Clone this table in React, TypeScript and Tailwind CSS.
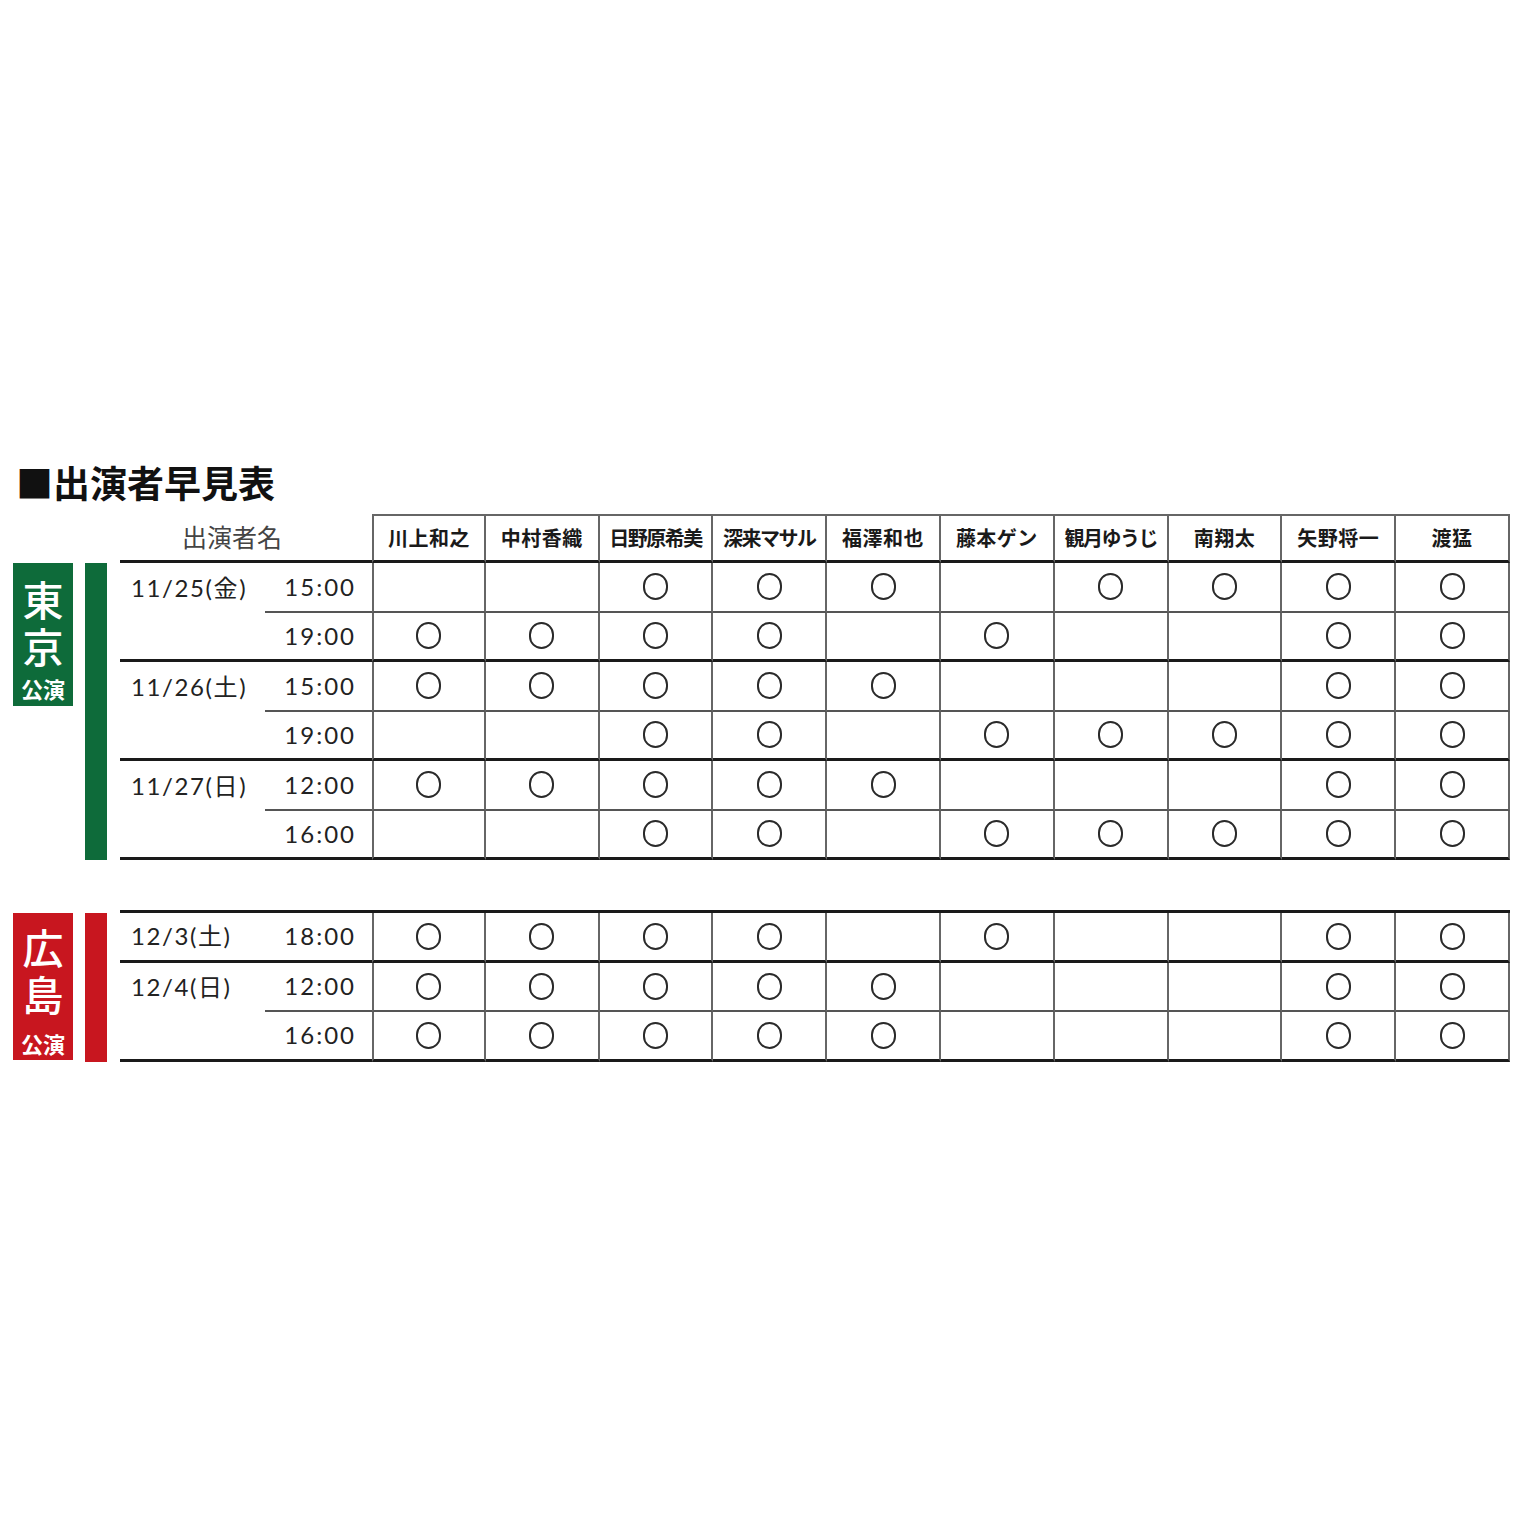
const names = [
  "川上和之",
  "中村香織",
  "日野原希美",
  "深来マサル",
  "福澤和也",
  "藤本ゲン",
  "観月ゆうじ",
  "南翔太",
  "矢野将一",
  "渡猛",
];

type Row = { date?: string; time: string; cast: string; thick: boolean };

const tokyo: Row[] = [
  { date: "11/25(金)", time: "15:00", cast: "0011101111", thick: false },
  { time: "19:00", cast: "1111010011", thick: true },
  { date: "11/26(土)", time: "15:00", cast: "1111100011", thick: false },
  { time: "19:00", cast: "0011011111", thick: true },
  { date: "11/27(日)", time: "12:00", cast: "1111100011", thick: false },
  { time: "16:00", cast: "0011011111", thick: true },
];

const hiroshima: Row[] = [
  { date: "12/3(土)", time: "18:00", cast: "1111010011", thick: true },
  { date: "12/4(日)", time: "12:00", cast: "1111100011", thick: false },
  { time: "16:00", cast: "1111100011", thick: true },
];

const font = { fontFamily: 'Lato, "Noto Sans CJK JP", sans-serif' };
const jp = { fontFamily: '"Noto Sans CJK JP", sans-serif' };

function TableRow({ row }: { row: Row }) {
  const line = row.thick ? "border-b-[3px] border-[#1a1a1a]" : "border-b-2 border-[#555]";
  return (
    <div className="flex h-[49.5px]">
      <div
        className={`w-[145px] flex items-center pl-[11px] text-[24px] tracking-[1.6px] text-[#222] ${
          row.thick ? "border-b-[3px] border-[#1a1a1a]" : ""
        }`}
        style={font}
      >
        {row.date}
      </div>
      <div
        className={`w-[107px] flex items-center justify-end pr-[16px] text-[24px] tracking-[2px] text-[#222] ${line}`}
        style={font}
      >
        {row.time}
      </div>
      {row.cast.split("").map((c, i) => (
        <div
          key={i}
          className={`w-[113.8px] flex items-center justify-center border-r-2 border-r-[#666] ${
            i === 0 ? "border-l-2 border-l-[#666]" : ""
          } ${line}`}
        >
          {c === "1" && <div className="w-[25px] h-[27px] rounded-full border-2 border-[#2a2a2a]" />}
        </div>
      ))}
    </div>
  );
}

function Section({
  rows,
  color,
  place,
  boxHeight,
  padTop,
  gapLast,
}: {
  rows: Row[];
  color: string;
  place: [string, string];
  boxHeight: string;
  padTop: string;
  gapLast: string;
}) {
  return (
    <div className="flex">
      <div className="flex pl-[13px]">
        <div className={`w-[60px] ${boxHeight} ${color} flex flex-col items-center ${padTop} text-white`} style={jp}>
          <span className="text-[41px] leading-[42px] font-medium">{place[0]}</span>
          <span className="mt-[5px] text-[41px] leading-[42px] font-medium">{place[1]}</span>
          <span className={`${gapLast} text-[22px] leading-[22px] font-bold`}>公演</span>
        </div>
        <div className={`ml-[12px] w-[22px] ${color}`} />
      </div>
      <div className="ml-[13px] flex flex-col">
        {rows.map((r, i) => (
          <TableRow key={i} row={r} />
        ))}
      </div>
    </div>
  );
}

export default function App() {
  return (
    <div className="w-[1536px] h-[1536px] bg-white pt-[456px]" style={font}>
      <h1 className="pl-[16px] text-[37px] leading-[52px] font-bold text-[#111] h-[58px]" style={jp}>
        ■出演者早見表
      </h1>
      <div className="flex pl-[120px] h-[49px]">
        <div
          className="w-[252px] flex items-center pl-[62px] text-[25px] text-[#444] border-b-[3px] border-[#1a1a1a]"
          style={jp}
        >
          出演者名
        </div>
        {names.map((n, i) => (
          <div
            key={n}
            className={`w-[113.8px] flex items-center justify-center text-[20px] font-bold text-[#1a1a1a] border-t-2 border-t-[#666] border-r-2 border-r-[#666] border-b-[3px] border-b-[#1a1a1a] ${
              i === 0 ? "border-l-2 border-l-[#666]" : ""
            } ${n.length >= 5 ? "tracking-[-1.5px]" : "tracking-[0.5px]"}`}
            style={jp}
          >
            {n}
          </div>
        ))}
      </div>
      <Section
        rows={tokyo}
        color="bg-[#0e6b3a]"
        place={["東", "京"]}
        boxHeight="h-[143px]"
        padTop="pt-[14px]"
        gapLast="mt-[11px]"
      />
      <div className="h-[50px]" />
      <div className="flex pl-[120px]">
        <div className="w-[1390px] border-t-[3px] border-[#1a1a1a]" />
      </div>
      <Section
        rows={hiroshima}
        color="bg-[#c8161f]"
        place={["広", "島"]}
        boxHeight="h-[147px]"
        padTop="pt-[12px]"
        gapLast="mt-[18px]"
      />
    </div>
  );
}
